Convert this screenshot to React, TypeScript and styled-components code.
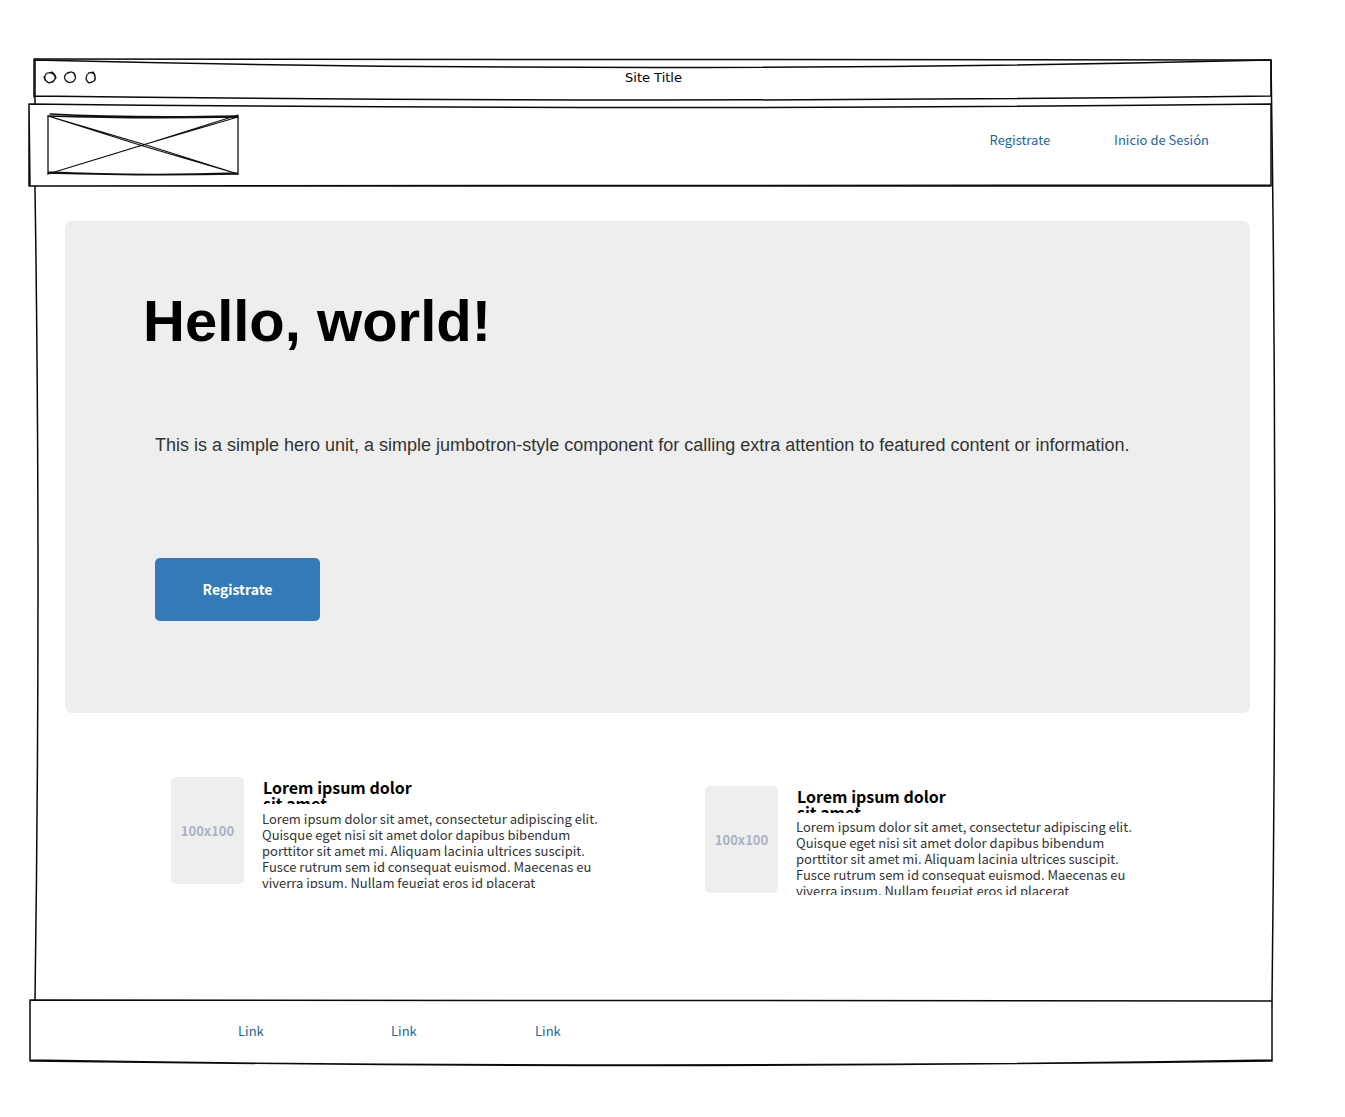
import React from "react";
import styled, { createGlobalStyle } from "styled-components";

const sans = '"Noto Sans CJK SC", "Noto Sans", sans-serif';
const arial = '"Liberation Sans", Arial, sans-serif';

const GlobalStyle = createGlobalStyle`
  * { box-sizing: border-box; }
  body { margin: 0; background: #fff; color: #000; font-family: ${sans}; }
  h1, h2, p { margin: 0; }
`;

const Page = styled.div`
  padding: 59px 73px 51px 35px;
`;

const Window = styled.div`
  position: relative;
  display: flex;
  flex-direction: column;
`;

const Sketch = styled.svg`
  position: absolute;
  inset: 0;
  width: 100%;
  height: 100%;
  overflow: visible;
  pointer-events: none;
  fill: none;
  stroke: #0a0a0a;
  stroke-width: 1.5;
  stroke-linecap: round;
  path { vector-effect: non-scaling-stroke; }
`;

const TitleBar = styled.header`
  position: relative;
  display: grid;
  grid-template-columns: 1fr auto 1fr;
  align-items: center;
  height: 37px;
  padding: 0 8px;
`;

const Dots = styled.svg`
  width: 54px;
  height: 14px;
  overflow: visible;
  fill: none;
  stroke: #111;
  stroke-width: 1.2;
  stroke-linejoin: round;
`;

const SiteTitle = styled.span`
  font: 13px/20px "DejaVu Sans", sans-serif;
`;

const NavBar = styled.nav`
  position: relative;
  display: flex;
  align-items: center;
  justify-content: space-between;
  height: 82px;
  margin: 8px 1px 0 -6px;
  padding: 0 62px 0 19px;
  background: #fff;
`;

const Logo = styled.svg`
  width: 190px;
  height: 58px;
  overflow: visible;
  fill: none;
  stroke: #111;
  stroke-width: 1.3;
  stroke-linecap: round;
`;

const NavLinks = styled.div`
  display: flex;
  gap: 64px;
  padding-bottom: 10px;
`;

const TextLink = styled.a`
  font-size: 13px;
  line-height: 20px;
  color: #2264a0;
  text-decoration: none;
`;

const Hero = styled.section`
  display: flex;
  flex-direction: column;
  align-items: flex-start;
  margin: 35px 22px 0 30px;
  padding: 67px 78px 92px;
  border-radius: 7px;
  background: #eee;
`;

const HeroTitle = styled.h1`
  font: bold 58px/66px ${arial};
`;

const HeroText = styled.p`
  margin: 79px 0 0 12px;
  font: 18px/24px ${arial};
  color: #333;
`;

const Button = styled.button`
  width: 165px;
  height: 63px;
  margin: 101px 0 0 12px;
  padding: 0 0 2px;
  border: 0;
  border-radius: 5px;
  background: #337ab7;
  color: #fff;
  font: bold 14px/20px ${sans};
`;

const Features = styled.section`
  display: grid;
  grid-template-columns: 1fr 1fr;
  align-items: start;
  height: 287px;
  padding: 64px 33px 0 136px;
`;

const Card = styled.article<{ $low?: boolean }>`
  display: flex;
  gap: 18px;
  margin-top: ${(p) => (p.$low ? 9 : 0)}px;
`;

const Thumb = styled.div`
  display: flex;
  flex: none;
  align-items: center;
  justify-content: center;
  width: 73px;
  height: 107px;
  border-radius: 5px;
  background: #eee;
  color: #aab2c6;
  font-size: 13px;
  font-weight: bold;
`;

const CardTitle = styled.h2`
  width: 170px;
  height: 27px;
  overflow: hidden;
  padding: 2px 1px 0;
  font-size: 16px;
  line-height: 16px;
`;

const CardText = styled.p<{ $tight?: boolean }>`
  width: 342px;
  height: ${(p) => (p.$tight ? 76 : 77)}px;
  overflow: hidden;
  margin-top: ${(p) => (p.$tight ? 6 : 7)}px;
  font-size: 13px;
  line-height: 16px;
  color: #333;
`;

const Footer = styled.footer`
  position: relative;
  display: flex;
  align-items: center;
  height: 61px;
  margin-left: -5px;
  padding-left: 208px;
  background: #fff;
`;

const FooterLinks = styled.div`
  display: grid;
  grid-template-columns: 153px 144px auto;
  align-items: center;
`;

const body =
  "Lorem ipsum dolor sit amet, consectetur adipiscing elit. Quisque eget nisi sit amet dolor dapibus bibendum porttitor sit amet mi. Aliquam lacinia ultrices suscipit. Fusce rutrum sem id consequat euismod. Maecenas eu viverra ipsum. Nullam feugiat eros id placerat";

function Outline({ box, d }: { box: string; d: string }) {
  return (
    <Sketch viewBox={box} preserveAspectRatio="none" aria-hidden="true">
      <path d={d} />
    </Sketch>
  );
}

function Feature({ low }: { low?: boolean }) {
  return (
    <Card $low={low}>
      <Thumb>100x100</Thumb>
      <div>
        <CardTitle>Lorem ipsum dolor sit amet</CardTitle>
        <CardText $tight={low}>{body}</CardText>
      </div>
    </Card>
  );
}

export default function App() {
  return (
    <>
      <GlobalStyle />
      <Page>
        <Window>
          <Outline
            box="0 0 1237 1002"
            d="M-1 0Q600 -1 1236 1M0 0V130Q6 520 0 941M1236 1Q1243 450 1237 941"
          />
          <TitleBar>
            <Outline
              box="0 0 1237 37"
              d="M-1 1Q618 16 1236 1M-1 1V38M-1 37Q618 45 1236 37M1236 1V37"
            />
            <Dots viewBox="0 0 54 14" aria-hidden="true">
              <path d="M5 2L9 1L12 4L13 7L10 11L6 12L2 9L1 6L4 2L8 2Q13 4 12 8Q9 13 4 11Q0 7 3 3" />
              <path d="M24 2Q28 0 31 2Q34 6 31 10Q27 13 23 10Q20 6 23 3L28 1Q32 2 32 6" />
              <path d="M22 8L26 12L28 11" strokeWidth="0.7" />
              <path d="M45 2L50 1Q53 4 52 9Q49 13 45 11Q42 8 44 4Q47 0 51 3Q53 7 51 10L46 12Q43 10 43 7" />
            </Dots>
            <SiteTitle>Site Title</SiteTitle>
          </TitleBar>
          <NavBar>
            <Outline
              box="0 0 1242 82"
              d="M0 0Q621 7 1242 0M0 0L1 82Q621 83 1242 82M1 82Q621 81 1242 81M0 0V82M1242 0V82"
            />
            <Logo viewBox="0 0 190 58" role="img" aria-label="Logo">
              <path d="M2 -2Q80 2 190 0M0 0Q90 3 190 1M0 0V58M190 0V58M0 57Q100 60 190 58M0 56Q90 60 190 57" />
              <path d="M0 0L95 30L190 58M0 0L98 29L190 58M0 58L95 29L190 -1M0 58L98 28L190 1" />
            </Logo>
            <NavLinks>
              <TextLink href="#registrate">Registrate</TextLink>
              <TextLink href="#sesion">Inicio de Sesión</TextLink>
            </NavLinks>
          </NavBar>
          <Hero>
            <HeroTitle>Hello, world!</HeroTitle>
            <HeroText>
              This is a simple hero unit, a simple jumbotron-style component for
              calling extra attention to featured content or information.
            </HeroText>
            <Button type="button">Registrate</Button>
          </Hero>
          <Features>
            <Feature />
            <Feature low />
          </Features>
          <Footer>
            <Outline
              box="0 0 1242 61"
              d="M0 0Q621 0 1242 1M0 0V60Q621 71 1242 60M0 61Q621 69 1242 61V0"
            />
            <FooterLinks>
              <TextLink href="#link-1">Link</TextLink>
              <TextLink href="#link-2">Link</TextLink>
              <TextLink href="#link-3">Link</TextLink>
            </FooterLinks>
          </Footer>
        </Window>
      </Page>
    </>
  );
}
